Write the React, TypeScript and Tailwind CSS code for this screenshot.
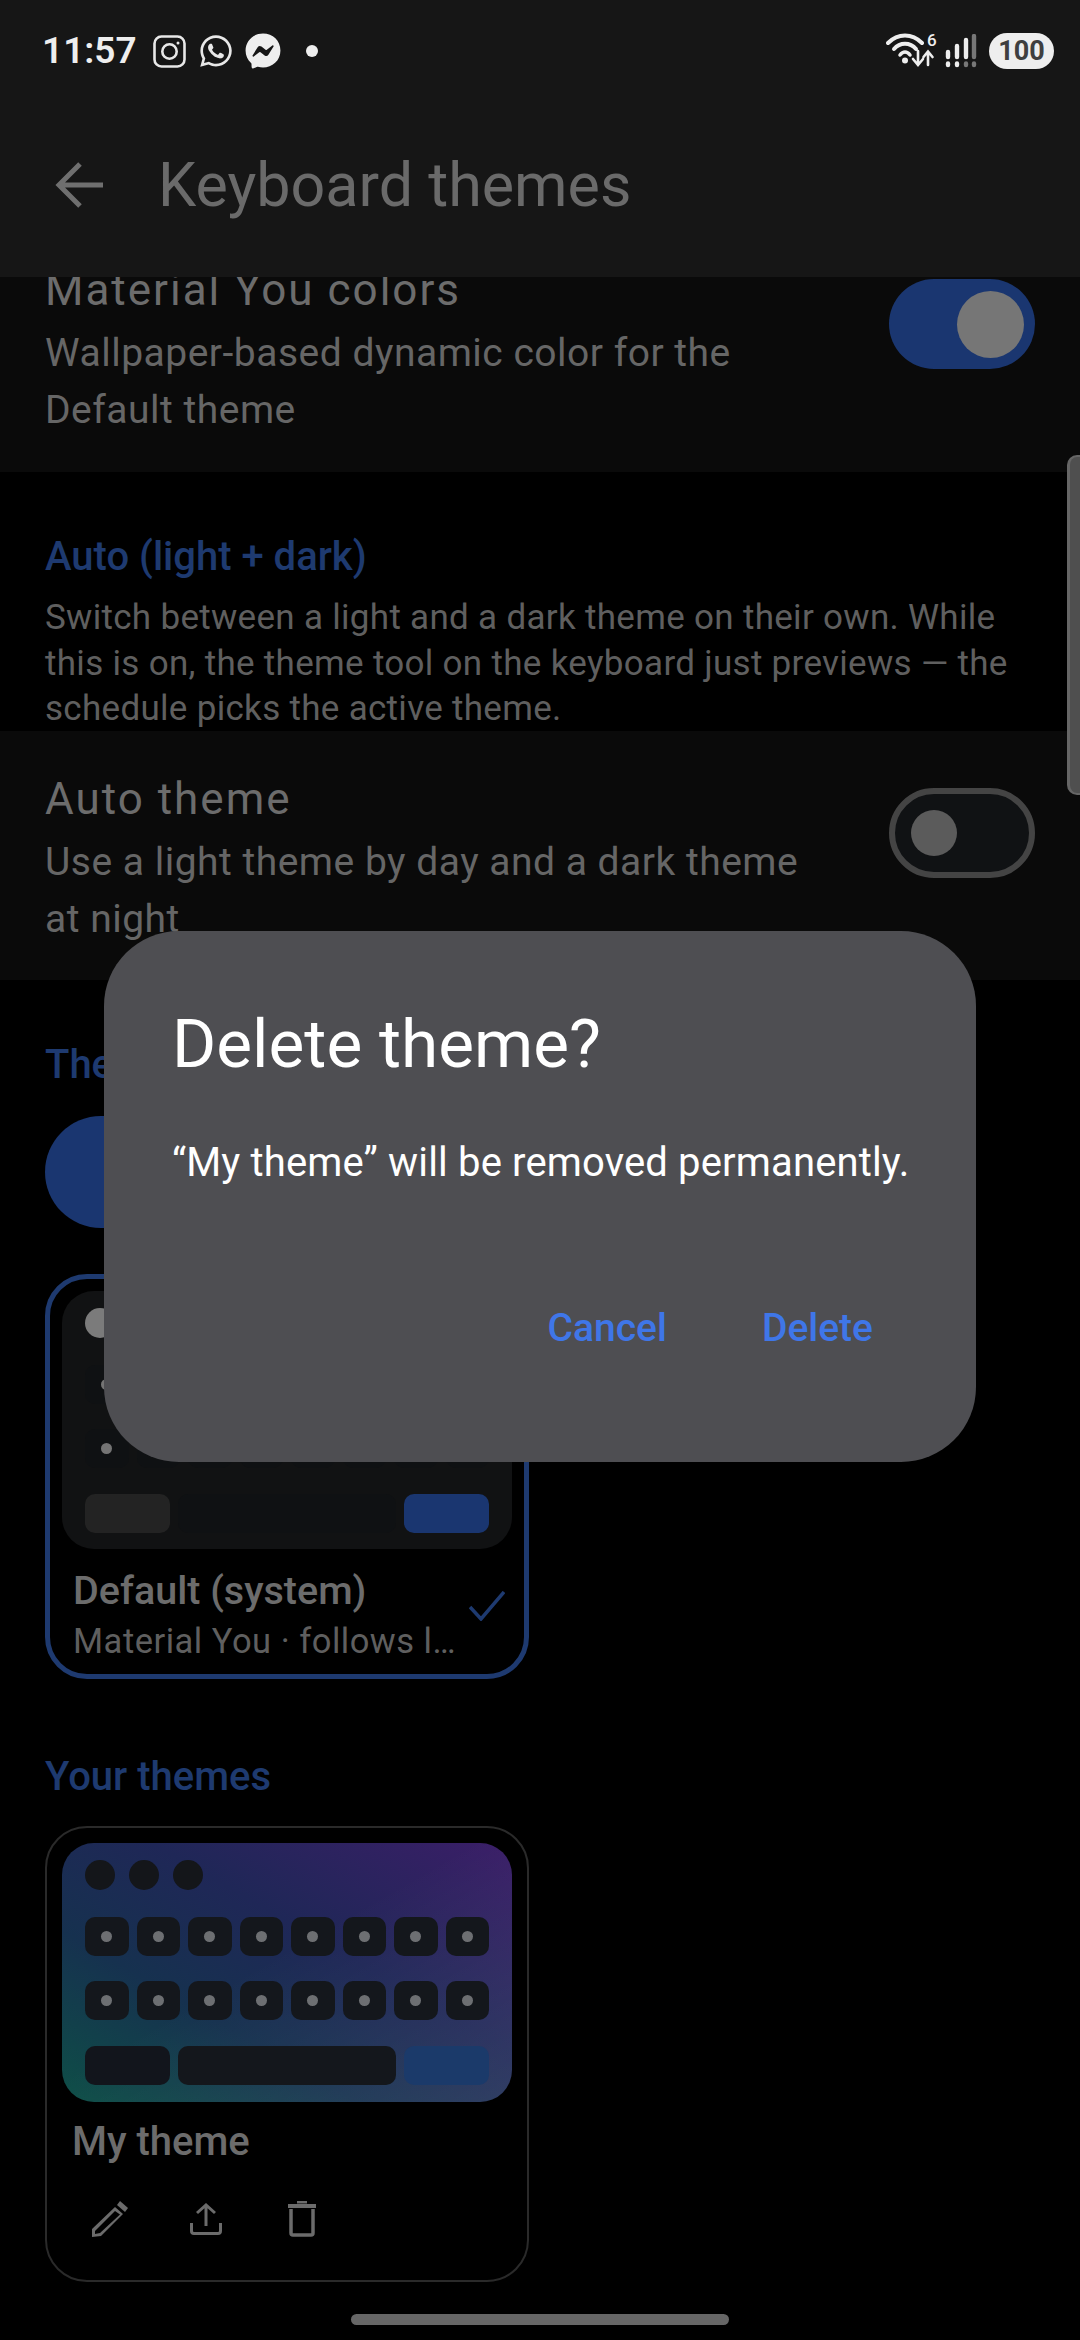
import { FaWhatsapp, FaFacebookMessenger } from "react-icons/fa";

const F = { fontFamily: "Roboto, sans-serif" };

function Insta() {
  return (
    <svg width="33" height="33" viewBox="0 0 33 33" fill="none" stroke="#e8e8e8" strokeWidth="2.6">
      <rect x="1.5" y="1.5" width="30" height="30" rx="7" />
      <circle cx="16.5" cy="16.5" r="7.2" />
      <circle cx="25" cy="8" r="1.5" fill="#e8e8e8" stroke="none" />
    </svg>
  );
}

function StatusRight() {
  return (
    <div className="flex items-center">
      <svg width="50" height="36" viewBox="0 0 50 36" fill="none" stroke="#eee" strokeLinecap="round">
        <path d="M2 10 C12 0 26 0 36 10" strokeWidth="4" />
        <path d="M8 16 C14 9 24 9 30 16" strokeWidth="4" />
        <path d="M14 22 C17 18 21 18 24 22" strokeWidth="3.5" />
        <circle cx="19" cy="27.5" r="3" fill="#eee" stroke="none" />
        <path d="M32 18 V31 M27 26 L32 32 L37 26" strokeWidth="2.6" />
        <path d="M42 32 V19 M37.5 24 L42 18.5 L46.5 24" strokeWidth="2.6" />
      </svg>
      <span className="text-[17px] leading-none font-medium text-[#eee] -ml-[9px] -mt-[21px] w-[10px]">6</span>
      <svg className="ml-[8px]" width="32" height="34" viewBox="0 0 32 34" strokeLinecap="round">
        <g stroke="#eee" strokeWidth="4.4">
          <path d="M3 23 V18 M12 23 V12 M21 23 V6" />
          <path d="M3 31 V29.5 M12 31 V29.5" />
        </g>
        <g stroke="#777" strokeWidth="4.4">
          <path d="M29 23 V2 M21 31 V29.5 M29 31 V29.5" />
        </g>
      </svg>
      <div className="ml-[12px] w-[65px] h-[36px] rounded-full bg-[#eeeeee] text-[#3f3f3f] text-[27px] font-bold leading-[36px] text-center">100</div>
    </div>
  );
}

function Toggle({ on }: { on: boolean }) {
  return on ? (
    <div className="w-[146px] h-[90px] rounded-full bg-[#1a3670] flex items-center justify-end pr-[11px] shrink-0">
      <div className="w-[67px] h-[67px] rounded-full bg-[#767676]" />
    </div>
  ) : (
    <div className="w-[146px] h-[90px] rounded-full bg-[#101214] border-[6px] border-[#444444] flex items-center pl-[16px] shrink-0">
      <div className="w-[46px] h-[46px] rounded-full bg-[#5b5b5b]" />
    </div>
  );
}

function Keys({ row, dot, accent, side }: { row: string; dot: string; accent: string; side: string }) {
  const eight = [0, 1, 2, 3, 4, 5, 6, 7];
  return (
    <div className="flex flex-col">
      <div className="grid grid-cols-8 gap-x-[8px] h-[39px] mt-[27px]">
        {eight.map((i) => (
          <div key={i} className={`rounded-[10px] flex items-center justify-center ${row}`}>
            <div className={`w-[11px] h-[11px] rounded-full ${dot}`} />
          </div>
        ))}
      </div>
      <div className="grid grid-cols-8 gap-x-[8px] h-[39px] mt-[25px]">
        {eight.map((i) => (
          <div key={i} className={`rounded-[10px] flex items-center justify-center ${row}`}>
            <div className={`w-[11px] h-[11px] rounded-full ${dot}`} />
          </div>
        ))}
      </div>
      <div className="flex gap-x-[8px] h-[39px] mt-[26px]">
        <div className={`w-[85px] rounded-[10px] ${side}`} />
        <div className={`flex-1 rounded-[10px] ${row}`} />
        <div className={`w-[85px] rounded-[10px] ${accent}`} />
      </div>
    </div>
  );
}

export default function App() {
  return (
    <div className="relative w-[1080px] h-[2340px] bg-black overflow-hidden" style={F}>
      {/* app bar with status bar */}
      <header className="relative z-10 h-[277px] bg-[#161616]">
        <div className="flex items-center h-[102px] pl-[42px] pr-[26px] justify-between">
          <div className="flex items-center">
            <span className="text-[37px] font-semibold text-[#eeeeee] w-[111px]">11:57</span>
            <Insta />
            <FaWhatsapp className="ml-[12px]" size={36} color="#e8e8e8" />
            <FaFacebookMessenger className="ml-[11px]" size={36} color="#eeeeee" />
            <div className="ml-[25px] w-[12px] h-[12px] rounded-full bg-[#eeeeee]" />
          </div>
          <StatusRight />
        </div>
        <div className="flex items-center h-[166px] pl-[55px]">
          <svg width="48" height="46" viewBox="0 0 48 46" fill="none" stroke="#6f6f6f" strokeWidth="5">
            <path d="M48 23 H4 M25 2 L4 23 L25 44" />
          </svg>
          <h1 className="ml-[55px] text-[61px] leading-none text-[#6a6a6a]">Keyboard themes</h1>
        </div>
      </header>

      {/* settings content */}
      <main className="h-[2063px] overflow-hidden">
        <section className="h-[195px] bg-[#0a0a0a] pl-[45px] pr-[45px] flex justify-between">
          <div className="-mt-[15px]">
            <div className="text-[44px] leading-[57px] tracking-[2px] text-[#6c6c6c]">Material You colors</div>
            <div className="mt-[6px] text-[39px] leading-[57px] tracking-[0.5px] text-[#666666] w-[760px]">
              Wallpaper-based dynamic color for the<br />Default theme
            </div>
          </div>
          <div className="mt-[2px]"><Toggle on /></div>
        </section>

        <section className="h-[259px] pt-[60px] px-[45px]">
          <h2 className="text-[40px] leading-[50px] font-medium text-[#1e3a70]">Auto (light + dark)</h2>
          <p className="mt-[13px] text-[35px] leading-[45.5px] tracking-[0.3px] text-[#5f5f5f] whitespace-nowrap">
            Switch between a light and a dark theme on their own. While<br />
            this is on, the theme tool on the keyboard just previews — the<br />
            schedule picks the active theme.
          </p>
        </section>

        <section className="h-[249px] bg-[#0a0a0a] pl-[45px] pr-[45px] flex justify-between">
          <div className="pt-[40px]">
            <div className="text-[44px] leading-[57px] tracking-[2px] text-[#6c6c6c]">Auto theme</div>
            <div className="mt-[6px] text-[39px] leading-[57px] tracking-[0.5px] text-[#666666] whitespace-nowrap">
              Use a light theme by day and a dark theme<br />at night
            </div>
          </div>
          <div className="mt-[57px]"><Toggle on={false} /></div>
        </section>

        <section className="pl-[45px]">
          <h2 className="mt-[60px] text-[40px] leading-[50px] font-medium text-[#1e3a70]">Themes</h2>
          <div className="mt-[26px] w-[300px] h-[112px] rounded-full bg-[#1a3670]" />

          <article className="mt-[46px] w-[484px] h-[405px] rounded-[42px] border-[5px] border-[#1e3a70] px-[12px] pt-[12px]">
            <div className="h-[258px] rounded-[32px] bg-[#111213] px-[23px] pt-[17px]">
              <div className="flex">
                <div className="w-[30px] h-[30px] rounded-full bg-[#7b7b7b]" />
              </div>
              <Keys row="bg-[#0f1113]" dot="bg-[#747474]" accent="bg-[#1a3670]" side="bg-[#232323]" />
            </div>
            <div className="flex items-end justify-between pl-[11px] pr-[7px] mt-[18px]">
              <div>
                <div className="text-[39.5px] leading-[48px] font-medium text-[#6c6c6c]">Default (system)</div>
                <div className="mt-[2px] text-[34.5px] leading-[48px] tracking-[0.5px] text-[#5f5f5f]">Material You · follows l…</div>
              </div>
              <svg className="mb-[44px]" width="36" height="30" viewBox="0 0 36 30" fill="none" stroke="#1e3a70" strokeWidth="3.5">
                <path d="M1 16 L12 28 L35 1" />
              </svg>
            </div>
          </article>

          <h2 className="mt-[73px] text-[40px] leading-[50px] font-medium text-[#1e3a70]">Your themes</h2>

          <article className="mt-[24px] w-[484px] h-[456px] rounded-[42px] border-[2px] border-[#2a2a2a] px-[15px] pt-[15px]">
            <div className="relative h-[259px] rounded-[32px] bg-[linear-gradient(to_top_right,#0e4f47,#16314f_33%,#1f2757_60%,#3b1e68)] overflow-hidden">
              <div className="h-full px-[23px] pt-[17px] bg-[linear-gradient(to_bottom_right,transparent_45%,rgba(255,255,255,0.09))]">
                <div className="flex gap-x-[14px]">
                  <div className="w-[30px] h-[30px] rounded-full bg-[#14161a]" />
                  <div className="w-[30px] h-[30px] rounded-full bg-[#14161a]" />
                  <div className="w-[30px] h-[30px] rounded-full bg-[#14161a]" />
                </div>
                <Keys row="bg-[#14171c]" dot="bg-[#6d6f72]" accent="bg-[#1b3a6a]" side="bg-[#12151c]" />
              </div>
            </div>
            <div className="pl-[10px] mt-[16px] text-[40px] leading-[48px] font-medium text-[#6c6c6c]">My theme</div>
            <div className="flex items-center pl-[30px] mt-[33px] h-[40px]">
              <svg width="36" height="36" viewBox="0 0 36 36" fill="#6b6b6b">
                <path d="M28 0 L36 7 L33 11 L25 4 Z" />
                <path fillRule="evenodd" d="M23 6 L31 13 L9 35 L0 36 L0 28 Z M23 10 L3 30 L3 33 L8 32 L28 13.5 Z" />
              </svg>
              <svg className="ml-[62px]" width="32" height="32" viewBox="0 0 32 32" fill="none" stroke="#6b6b6b" strokeWidth="3">
                <path d="M16 23 V2 M7 10 L16 2 L25 10" />
                <path d="M1.5 20 V28 Q1.5 30.5 4 30.5 H28 Q30.5 30.5 30.5 28 V20" />
              </svg>
              <svg className="ml-[66px]" width="28" height="36" viewBox="0 0 28 36" fill="none" stroke="#6b6b6b">
                <path d="M0 5 H28" strokeWidth="4" />
                <path d="M9 1 H19" strokeWidth="3" />
                <path d="M3 8 V32 Q3 34 5 34 H23 Q25 34 25 32 V8" strokeWidth="3.5" />
              </svg>
            </div>
          </article>
        </section>
      </main>

      {/* scrollbar */}
      <div className="absolute right-0 top-[455px] w-[13px] h-[340px] rounded-l-[10px] border-l-[3px] border-y-[2px] border-[#666666] bg-[#4f4f4f]" />

      {/* home indicator */}
      <div className="absolute left-[351px] top-[2314px] w-[378px] h-[11px] rounded-full bg-[#666666]" />

      {/* dialog */}
      <div className="absolute left-[104px] top-[931px] w-[872px] h-[531px] rounded-[75px] bg-[#4e4e52] pl-[68px] pr-[103px] flex flex-col">
        <h3 className="mt-[73px] text-[67.5px] leading-[80px] text-white">Delete theme?</h3>
        <p className="mt-[54px] text-[40px] leading-[50px] tracking-[0.15px] text-white whitespace-nowrap">“My theme” will be removed permanently.</p>
        <div className="mt-[115px] flex justify-end gap-x-[95px] text-[39px] leading-[50px] font-medium text-[#3f76e8]">
          <span>Cancel</span>
          <span>Delete</span>
        </div>
      </div>
    </div>
  );
}
